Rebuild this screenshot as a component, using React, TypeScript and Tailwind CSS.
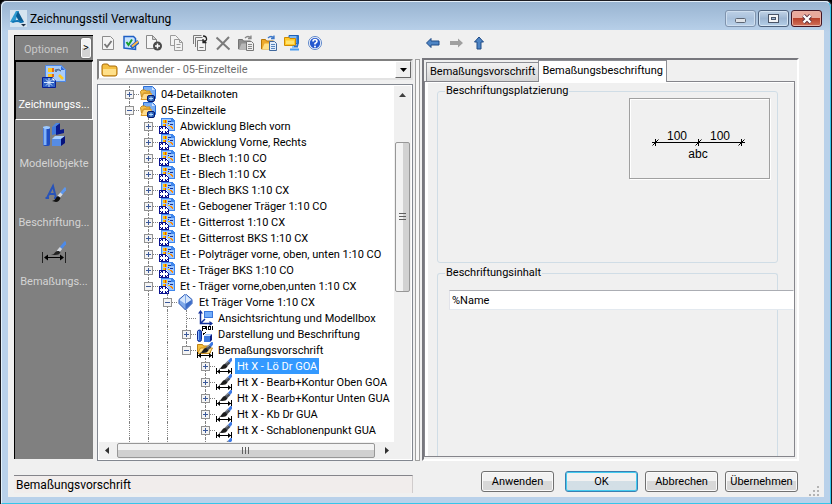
import { useState } from 'react'
import type { ReactNode } from 'react'
import clsx from 'clsx'

type IconName = 'folder' | 'sheet' | 'cube' | 'axes' | 'display' | 'dimFolder' | 'dim'

interface TreeRow {
  label: string
  level: number
  icon: IconName
  state?: 'open' | 'closed'
  last?: boolean
}

const ROWS: TreeRow[] = [
  { label: '04-Detailknoten', level: 0, icon: 'folder', state: 'closed' },
  { label: '05-Einzelteile', level: 0, icon: 'folder', state: 'open' },
  { label: 'Abwicklung Blech vorn', level: 1, icon: 'sheet', state: 'closed' },
  { label: 'Abwicklung Vorne, Rechts', level: 1, icon: 'sheet', state: 'closed' },
  { label: 'Et - Blech 1:10 CO', level: 1, icon: 'sheet', state: 'closed' },
  { label: 'Et - Blech 1:10 CX', level: 1, icon: 'sheet', state: 'closed' },
  { label: 'Et - Blech BKS 1:10 CX', level: 1, icon: 'sheet', state: 'closed' },
  { label: 'Et - Gebogener Träger 1:10 CO', level: 1, icon: 'sheet', state: 'closed' },
  { label: 'Et - Gitterrost 1:10 CX', level: 1, icon: 'sheet', state: 'closed' },
  { label: 'Et - Gitterrost BKS 1:10 CX', level: 1, icon: 'sheet', state: 'closed' },
  { label: 'Et - Polyträger vorne, oben, unten 1:10 CO', level: 1, icon: 'sheet', state: 'closed' },
  { label: 'Et - Träger BKS 1:10 CO', level: 1, icon: 'sheet', state: 'closed' },
  { label: 'Et - Träger vorne,oben,unten 1:10 CX', level: 1, icon: 'sheet', state: 'open' },
  { label: 'Et Träger Vorne 1:10 CX', level: 2, icon: 'cube', state: 'open' },
  { label: 'Ansichtsrichtung und Modellbox', level: 3, icon: 'axes' },
  { label: 'Darstellung und Beschriftung', level: 3, icon: 'display', state: 'closed' },
  { label: 'Bemaßungsvorschrift', level: 3, icon: 'dimFolder', state: 'open', last: true },
  { label: 'Ht X - Lö Dr GOA', level: 4, icon: 'dim', state: 'closed' },
  { label: 'Ht X - Bearb+Kontur Oben GOA', level: 4, icon: 'dim', state: 'closed' },
  { label: 'Ht X - Bearb+Kontur Unten GUA', level: 4, icon: 'dim', state: 'closed' },
  { label: 'Ht X - Kb Dr GUA', level: 4, icon: 'dim', state: 'closed' },
  { label: 'Ht X - Schablonenpunkt GUA', level: 4, icon: 'dim', state: 'closed' },
  { label: 'Ht X - Extern GUA', level: 4, icon: 'dim', state: 'closed' },
]

export default function App() {
  return (
    <div className="h-screen bg-black font-[Roboto,Arial,sans-serif] text-[11px] leading-4 text-black">
      <div className="flex h-full flex-col overflow-hidden rounded-t-md border-x border-t border-[#1c1c22] bg-[#b9d1ea]">
        <div className="flex min-h-0 flex-1 flex-col rounded-t-md border border-t-[#e4eef8] border-r-[#35c5ea] border-b-[#35c5ea] border-l-[#e4f2fb] bg-linear-to-b from-[#99b4d1] to-[#b9d1ea] to-[30px] px-1.5 pb-1.5">
          <TitleBar />
          <main className="flex min-h-0 flex-1 flex-col bg-[#f0f0f0] pl-1.5">
            <div className="flex min-h-0 flex-1">
              <Sidebar />
              <Browser />
              <div className="mt-[29px] mr-0.5 w-[5px] border border-[#a0a0a0] bg-[#f7f7f7]" />
              <Editor />
            </div>
            <Footer />
          </main>
        </div>
      </div>
    </div>
  )
}

function TitleBar() {
  return (
    <header className="flex h-7 shrink-0 items-start">
      <AppLogo />
      <h1 className="ml-[3px] pt-2 text-[12px] leading-[18px]">Zeichnungsstil Verwaltung</h1>
      <div className="mr-0.5 ml-auto flex gap-0.5 pt-2">
        <button
          aria-label="Minimieren"
          className="grid h-[17px] w-[31px] place-items-center rounded-[3px] border border-[#7f93ad] bg-linear-to-b from-[#bdd0e6] via-[#a9c1dc] to-[#bad1e9] shadow-[inset_0_0_0_1px_#cfdff0]"
        >
          <svg width="11" height="5" viewBox="0 0 11 5" className="mt-1">
            <rect x="0.5" y="0.5" width="10" height="4" rx="1" fill="#dfe3e8" stroke="#5d6675" />
          </svg>
        </button>
        <button
          aria-label="Maximieren"
          className="grid h-[17px] w-[31px] place-items-center rounded-[3px] border border-[#4e627d] bg-linear-to-b from-[#c3d5e8] via-[#9db6d2] to-[#b5cfe8] shadow-[inset_0_0_0_1px_#d6e5f3]"
        >
          <svg width="11" height="9" viewBox="0 0 11 9" shapeRendering="crispEdges">
            <rect x="0.5" y="0.5" width="10" height="8" fill="#f4f5f7" stroke="#4a5568" />
            <rect x="3.5" y="3.5" width="4" height="2" fill="#9db6d2" stroke="#4a5568" />
          </svg>
        </button>
        <button
          aria-label="Schließen"
          className="grid h-[17px] w-[31px] place-items-center rounded-[3px] border border-[#431422] bg-linear-to-b from-[#e9a99c] from-45% via-[#b8412b] via-50% to-[#d0705a] shadow-[inset_0_0_0_1px_#e8b0a4]"
        >
          <svg width="12" height="10" viewBox="0 0 12 10">
            <path d="M2.5 1.5 9.5 8.5M9.5 1.5 2.5 8.5" stroke="#5a3040" strokeWidth="4" />
            <path d="M2.5 1.5 9.5 8.5M9.5 1.5 2.5 8.5" stroke="#fff" strokeWidth="2.4" />
          </svg>
        </button>
      </div>
    </header>
  )
}

function Sidebar() {
  const [active, setActive] = useState(0)
  const items = [
    { label: 'Zeichnungss...', icon: <StyleIcon /> },
    { label: 'Modellobjekte', icon: <ModelIcon /> },
    { label: 'Beschriftung...', icon: <LabelIcon /> },
    { label: 'Bemaßungs...', icon: <DimensionIcon /> },
  ]

  return (
    <nav className="mt-[5px] mr-1 mb-0.5 w-[79px] shrink-0 border-t border-l border-black bg-[#808080]">
      <div className="flex h-[25px] items-center border-b border-black">
        <span className="ml-[9px] pt-1 text-[#c8c8c8]">Optionen</span>
        <button
          aria-label="Optionen ausklappen"
          className="mr-px ml-auto h-[22px] w-3 rounded-[3px] border border-[#707070] bg-linear-to-b from-[#f2f2f2] from-50% to-[#d4d4d4] to-50% shadow-[inset_0_0_0_1px_#fcfcfc]"
        >
          &gt;
        </button>
      </div>
      {items.map((item, i) => (
        <button
          key={item.label}
          onClick={() => setActive(i)}
          className={clsx(
            'flex h-[59px] w-full flex-col items-center gap-1 border pt-0.5 whitespace-nowrap',
            active === i
              ? 'border-t-black border-r-white border-b-white border-l-black text-white'
              : 'border-transparent text-[#d4d4d4]',
          )}
        >
          {item.icon}
          <span className="pt-[5px]">{item.label}</span>
        </button>
      ))}
    </nav>
  )
}

function Browser() {
  return (
    <section className="mr-0.5 flex w-[316px] shrink-0 flex-col">
      <div className="flex h-[29px] shrink-0 items-center gap-[7px] pb-[3px] pl-[3px]">
        <Tool label="Prüfen"><CheckPage /></Tool>
        <Tool label="Bearbeiten"><EditPage /></Tool>
        <Tool label="Neu"><NewPage /></Tool>
        <Tool label="Kopieren"><CopyPage /></Tool>
        <Tool label="Einfügen"><PastePage /></Tool>
        <Tool label="Löschen"><DeleteCross /></Tool>
        <Tool label="Exportieren"><FolderExchange gray /></Tool>
        <Tool label="Importieren"><FolderExchange /></Tool>
        <Tool label="Archivieren"><ArchiveIcon /></Tool>
        <Tool label="Hilfe"><HelpIcon /></Tool>
      </div>

      <div className="flex h-[21px] shrink-0 items-center border-2 border-t-[#808080] border-r-[#e3e3e3] border-b-[#e3e3e3] border-l-[#808080] bg-white pl-0.5">
        <svg width="17" height="16" viewBox="0 0 17 16">
          <path d="M1 4q0-2 2-2h3q1.500 0 2 2h6q2 0 2 2v6q0 2-2 2H3q-2 0-2-2z" fill="#f5c043" stroke="#a86a08" />
          <path d="M2 7h13v5q0 1-1 1H3q-1 0-1-1z" fill="#ffe08a" />
        </svg>
        <select
          aria-label="Ordner"
          className="ml-[7px] h-4 min-w-0 flex-1 appearance-none bg-white text-[#6d6d6d] outline-none"
        >
          <option>Anwender - 05-Einzelteile</option>
        </select>
        <span className="grid h-[17px] w-4 place-items-center border border-t-white border-r-[#696969] border-b-[#696969] border-l-white bg-[#f0f0f0]">
          <svg width="7" height="4" viewBox="0 0 7 4">
            <path d="M0 0h7L3.500 4z" />
          </svg>
        </span>
      </div>

      <div className="mt-1 flex min-h-0 flex-1 flex-col border border-[#828790] bg-white p-px">
        <div className="flex min-h-0 flex-1">
          <Tree />
          <VerticalScroll />
        </div>
        <HorizontalScroll />
      </div>
    </section>
  )
}

function Tool({ label, children }: { label: string; children: ReactNode }) {
  return (
    <button aria-label={label} title={label} className="size-4 shrink-0">
      {children}
    </button>
  )
}

function Tree() {
  const [selected, setSelected] = useState('Ht X - Lö Dr GOA')

  return (
    <ul role="tree" className="min-w-0 flex-1 overflow-hidden pl-[21px]">
      {ROWS.map((row) => (
        <li
          key={row.label}
          role="treeitem"
          aria-level={row.level + 1}
          aria-selected={row.label === selected}
          onClick={() => setSelected(row.label)}
          className="flex h-4 cursor-default whitespace-nowrap"
        >
          {Array.from({ length: row.level }, (_, i) => (
            <span key={i} className="flex w-[19px] shrink-0 pl-[9px]">
              {i < 3 && <span className="border-l border-dotted border-[#808080]" />}
            </span>
          ))}
          <Branch state={row.state} last={row.last} />
          <span className="mr-[3px] ml-px shrink-0">
            <TreeIcon name={row.icon} />
          </span>
          <span className={clsx('px-0.5 leading-[18px]', row.label === selected && 'bg-[#3399ff] text-white')}>
            {row.label}
          </span>
        </li>
      ))}
    </ul>
  )
}

function Branch({ state, last }: Pick<TreeRow, 'state' | 'last'>) {
  return (
    <span className="relative flex w-[19px] shrink-0 pl-[9px]">
      <span className={clsx('border-l border-dotted border-[#808080]', last && 'h-2')} />
      <span className="mt-2 flex-1 self-start border-t border-dotted border-[#808080]" />
      {state && (
        <button
          aria-label={state === 'open' ? 'Zuklappen' : 'Aufklappen'}
          className="absolute top-1 left-[5px] size-[9px] bg-white"
        >
          <svg width="9" height="9" viewBox="0 0 9 9" shapeRendering="crispEdges">
            <rect x="0.5" y="0.5" width="8" height="8" fill="#f4f4f4" stroke="#919191" />
            <path d="M2 4.500h5" stroke="#3c5a9a" />
            {state === 'closed' && <path d="M4.500 2v5" stroke="#3c5a9a" />}
          </svg>
        </button>
      )}
    </span>
  )
}

function VerticalScroll() {
  return (
    <div aria-hidden="true" className="flex w-[17px] shrink-0 flex-col items-center bg-[#f0f0f0]">
      <svg width="7" height="4" viewBox="0 0 7 4" className="mt-[7px] mb-[45px] shrink-0">
        <path d="M0 4h7L3.500 0z" fill="#404040" />
      </svg>
      <div className="grid h-[42%] w-[15px] place-items-center rounded-xs border border-[#979797] bg-linear-to-r from-[#f3f3f3] from-50% to-[#d2d2d2] to-50%">
        <svg width="7" height="8" viewBox="0 0 7 8" shapeRendering="crispEdges">
          <path d="M0 .5h7M0 3.500h7M0 6.500h7" stroke="#606060" />
        </svg>
      </div>
    </div>
  )
}

function HorizontalScroll() {
  return (
    <div aria-hidden="true" className="flex h-[17px] shrink-0 items-center bg-[#f0f0f0] pr-[22px] pl-1.5">
      <svg width="4" height="7" viewBox="0 0 4 7">
        <path d="M4 0v7L0 3.500z" fill="#303030" />
      </svg>
      <div className="mr-2.5 ml-2 grid h-[15px] flex-1 place-items-center rounded-xs border border-[#979797] bg-linear-to-b from-[#f3f3f3] from-50% to-[#d0d0d0] to-50%">
        <svg width="8" height="7" viewBox="0 0 8 7" shapeRendering="crispEdges">
          <path d="M.5 0v7M3.500 0v7M6.500 0v7" stroke="#606060" />
        </svg>
      </div>
      <svg width="4" height="7" viewBox="0 0 4 7">
        <path d="M0 0v7L4 3.500z" fill="#303030" />
      </svg>
    </div>
  )
}

function Editor() {
  const [tab, setTab] = useState(1)
  const tabs = ['Bemaßungsvorschrift', 'Bemaßungsbeschriftung']

  return (
    <section className="mr-[25px] flex min-w-0 flex-1 flex-col">
      <div className="flex h-7 shrink-0 items-center gap-[7px] pb-0.5 pl-[3px]">
        <Tool label="Zurück">
          <svg width="16" height="16" viewBox="0 0 16 16">
            <path d="M1.500 8 6 3.500V6h8v4H6v2.500z" fill="#4d84c4" stroke="#1f4a86" />
          </svg>
        </Tool>
        <Tool label="Vorwärts">
          <svg width="16" height="16" viewBox="0 0 16 16">
            <path d="M15 8 10 3.500V6H2v4h8v2.500z" fill="#a0a0a0" />
          </svg>
        </Tool>
        <Tool label="Nach oben">
          <svg width="16" height="16" viewBox="0 0 16 16">
            <path d="M8 2 12.500 7H10v7H6V7H3.500z" fill="#4d84c4" stroke="#1f4a86" />
          </svg>
        </Tool>
      </div>
      <div className="flex min-h-0 flex-1 flex-col border-2 border-t-[#77777d] border-r-white border-b-white border-l-[#77777d] pr-0.5 pb-0.5">
        <div role="tablist" className="flex h-[21px] shrink-0 items-end pl-0.5">
          {tabs.map((label, i) => (
            <button
              key={label}
              role="tab"
              aria-selected={tab === i}
              onClick={() => setTab(i)}
              className={clsx(
                'border border-b-0 border-[#8c8e94] px-[3px]',
                tab === i
                  ? 'z-10 -mb-px h-[22px] bg-white pb-0.5'
                  : 'h-[19px] border-r-0 bg-linear-to-b from-[#f2f2f2] to-[#d6d6d6]',
              )}
            >
              {label}
            </button>
          ))}
        </div>
        <div className="min-h-0 flex-1 overflow-hidden border border-[#85858b] bg-[#f0f0f0]">
          <div className="flex h-full flex-col gap-1 border-t border-l-3 border-white pt-0.5 pr-4 pl-[9px]">
            <fieldset className="flex h-[178px] min-w-0 shrink-0 justify-end rounded-[3px] border border-[#d0dde6] pt-px pr-[7px]">
              <legend className="ml-[7px] px-px leading-3">Beschriftungsplatzierung</legend>
              <Placement />
            </fieldset>
            <fieldset className="-mb-1 min-w-0 flex-1 rounded-t-[3px] border border-b-0 border-[#d0dde6] pt-[11px] pl-[11px]">
              <legend className="-ml-1 px-px leading-3">Beschriftungsinhalt</legend>
              <div className="-mr-[17px]">
                <input
                  aria-label="Beschriftungsinhalt"
                  defaultValue="%Name"
                  className="block h-5 w-full border border-t-[#abadb3] border-r-white border-b-[#e3e9ef] border-l-[#e2e3ea] bg-white px-0.5 outline-none"
                />
              </div>
            </fieldset>
          </div>
        </div>
      </div>
    </section>
  )
}

function Placement() {
  return (
    <button
      aria-label="Platzierung wählen"
      className="grid h-[81px] w-[141px] place-items-center border border-[#a0a0a0] shadow-[inset_1px_1px_0_#fff,1px_1px_0_#fff]"
    >
      <svg
        width="139"
        height="79"
        viewBox="0 0 139 79"
        className="font-['Liberation_Sans',Arial,sans-serif] text-[12px]"
      >
        <path d="M22 43.500h93" stroke="#000" shapeRendering="crispEdges" />
        {[25.5, 68.5, 111.5].map((x) => (
          <g key={x} stroke="#000">
            <path d={`M${x} 40v7`} shapeRendering="crispEdges" />
            <path d={`M${x - 3} 46.500l6-6`} />
          </g>
        ))}
        <text x="47" y="41" textAnchor="middle">100</text>
        <text x="90" y="41" textAnchor="middle">100</text>
        <text x="68" y="59" textAnchor="middle">abc</text>
      </svg>
    </button>
  )
}

function Footer() {
  return (
    <footer className="flex h-9 shrink-0 items-start pt-2.5">
      <output className="mt-1 h-[18px] w-[399px] border-t border-r border-t-[#85858b] border-r-[#d0cccc] bg-[#f1edec] pl-0.5 text-[12px] leading-[18px]">
        Bemaßungsvorschrift
      </output>
      <div className="ml-auto flex gap-[7px]">
        <DialogButton>Anwenden</DialogButton>
        <DialogButton primary>OK</DialogButton>
        <DialogButton>Abbrechen</DialogButton>
        <DialogButton>Übernehmen</DialogButton>
      </div>
      <svg width="12" height="12" viewBox="0 0 12 12" className="mr-1 ml-2.5 self-end" fill="#b4b4b4">
        <path d="M9 1h2v2H9zM5 5h2v2H5zM9 5h2v2H9zM1 9h2v2H1zM5 9h2v2H5zM9 9h2v2H9z" />
      </svg>
    </footer>
  )
}

function DialogButton({ primary, children }: { primary?: boolean; children: ReactNode }) {
  return (
    <button
      className={clsx(
        'h-[21px] w-[73px] rounded-[3px] border bg-linear-to-b from-[#f2f2f2] from-50%',
        primary
          ? 'ml-1 border-[#3c7fb1] to-[#d3dfe6] to-50% shadow-[inset_0_0_0_1px_#44ccf0]'
          : 'border-[#707070] to-[#d8d8d8] to-50% shadow-[inset_0_0_0_1px_#fafafa]',
      )}
    >
      {children}
    </button>
  )
}

function AppLogo() {
  return (
    <svg width="17" height="17" viewBox="0 0 17 17" className="mt-2 ml-0.5 shrink-0">
      <rect width="17" height="17" fill="#d5e4f0" />
      <path d="M0 12 6 1h3l-4 11z" fill="#2d9ad0" />
      <path d="M8 1 14 12l-4 1-4-7z" fill="#0b5c93" />
      <path d="M1 12q6-4 13 0l-3 1q-4-2-8 0z" fill="#0f75b5" />
      <path d="M11 14h5l-2.500 2.500z" fill="#1f2f44" />
    </svg>
  )
}

function TreeIcon({ name }: { name: IconName }) {
  return (
    <svg width="16" height="16" viewBox="0 0 16 16">
      {name === 'folder' && (
        <>
          <path d="M3.500.5h9l3 3v9h-12z" fill="#79aef5" stroke="#2c6fd6" />
          <path d="M12 1v3h3z" fill="#d4e6ff" />
          <path d="M.5 5.500 2 4h3l1 1h4v2H3.500l-2 4z" fill="#f5bf4a" stroke="#c48a1c" />
          <path d="M1 13.500 3.500 7.500h8l-2 6z" fill="#ffdc8c" stroke="#d99a2b" />
          <rect x="7.500" y="9.500" width="7" height="6" rx="1.500" fill="#2b62b8" stroke="#06186e" />
          <path d="M11 10.500v4M9 12.500h4" stroke="#b6dcff" />
        </>
      )}
      {name === 'sheet' && (
        <g shapeRendering="crispEdges">
          <path d="M2 0h11l3 3v10H2z" fill="#3f86ec" />
          <path d="M3 1h9v3h3v8H3z" fill="#9cc6ff" />
          <path d="M4 2h4v3H4zM4 6h3v2H4zM9 7h2v1H9z" fill="#ffc400" />
          <path d="M6 2h1v3H6zM6 6h1v2H6z" fill="#e0500a" />
          <path d="M9 3h3v1H9zM9 5h1v1H9zM11 6h3v1h-3z" fill="#12309a" />
          <path d="M11 8h2v1h-2zM12 9h2v1h-2zM13 10h1v1h-1z" fill="#ff8a00" />
          <path d="M0 8h7v1h1v1h1v1h1v5H0z" fill="#0a1290" />
          <path
            d="M4 9h1v6H4zM5 9h1v6H5zM1 11h8v2H1zM2 10h1v1H2zM7 10h1v1H7zM2 13h1v1H2zM7 13h1v1H7zM1 9h1v1H1zM1 14h1v1H1zM8 14h1v1H8z"
            fill="#fff"
          />
          <path d="M7 8h1v1H7zM8 9h1v1H8z" fill="#fff" />
        </g>
      )}
      {name === 'cube' && (
        <>
          <path d="M7.500 0 14 5.500v4L7.500 16 1 9.500v-4z" fill="#7fa8e8" stroke="#2a57b4" />
          <path d="M7.500.5 13.500 6l-6 4-6-4z" fill="#d5e6fc" />
          <path d="M7.500 10v5.500l6-6V6z" fill="#3c6cc6" />
          <path d="M7.500 1v9" stroke="#7fa8e8" />
        </>
      )}
      {name === 'axes' && (
        <>
          <rect x="7.500" y="1.500" width="8" height="6" fill="#73adfa" stroke="#3976db" />
          <path d="M3.500 2v11.500H15M3.500 13.500 8 9" fill="none" stroke="#12309a" strokeWidth="1.500" />
          <path d="M1 3.500 3.500 0 6 3.500zM12.500 11l3.500 2.500-3.500 2.500z" fill="#12309a" />
        </>
      )}
      {name === 'display' && (
        <>
          <rect x="0.500" y="4" width="4" height="11.500" rx="2" fill="#2f66d0" stroke="#0d2b94" />
          <path d="M1.500 5v9" stroke="#8cb8ff" />
          <path d="M7 9.500 9 8h6l-1.500 1.500z" fill="#9cc4ff" />
          <rect x="7" y="10" width="6" height="6" fill="#3c78de" />
          <path d="m13 10 2-2v6l-2 2z" fill="#0b1e86" />
          <path
            d="M5.500 0v5M6 .5h2v2H6M9.500 0v4M11.500.5h2v3h-2zM15.500 0v4M6 8.500l3-2.500"
            fill="none"
            stroke="#000"
            shapeRendering="crispEdges"
          />
        </>
      )}
      {name === 'dimFolder' && (
        <>
          <path d="M.5 11V2.500h5l1 1.500h7v7z" fill="#f5bf3c" stroke="#bf8316" />
          <path d="M.5 11.500 3.500 6h12l-3 5.500z" fill="#ffe08a" stroke="#c98e20" />
          <Brush />
        </>
      )}
      {name === 'dim' && <Brush />}
    </svg>
  )
}

function Brush() {
  return (
    <>
      <path d="M12.500 4.500 16 .5" stroke="#3c78e4" strokeWidth="3" />
      <path d="m9.500 7.500 3.500-3.500" stroke="#4a4f58" strokeWidth="3.500" />
      <path d="m10 5.500 2.500-2.500" stroke="#b4bcc8" />
      <path d="M3 10.500q2-.5 3-2.500t3-2l2.500 2.500Q10 11 6 11z" fill="#1c1c1c" />
      <path d="M.5 10v6M15.500 10v6M1 13.500h14" stroke="#000" shapeRendering="crispEdges" />
      <path d="m1 13.500 3-2.500v5zM15 13.500 12 11v5z" />
    </>
  )
}

function StyleIcon() {
  return (
    <svg width="24" height="24" viewBox="0 0 24 24" className="shrink-0">
      <path d="M3.500 1.500h16l4 4v12h-20z" fill="#a9ccfa" stroke="#4b86e4" />
      <path d="M19 2v4h4z" fill="#2f6be0" />
      <path d="M6 4h4v4H6zM6 10h4v3H6z" fill="#ffc81e" />
      <path d="M11 4v4M11 10v3" stroke="#e06a1b" strokeWidth="2" />
      <path d="M13 6q4-2 6 1l-2-1q-2-1-3 2z" fill="#6d88a6" stroke="#526e93" />
      <path d="m17 11 4 4" stroke="#ffc81e" strokeWidth="2.500" />
      <path d="M.5 13.500h10l3 3v7H.5z" fill="#2f62c4" stroke="#0a1f95" />
      <path d="M7 14v9M2 18.500h10M4 15.500l6 6M10 15.500l-6 6" stroke="#d8e8ff" />
      <path d="M10.500 13.500v3h3z" fill="#fff" />
    </svg>
  )
}

function ModelIcon() {
  return (
    <svg width="24" height="24" viewBox="0 0 24 24" className="shrink-0">
      <rect x="1" y="4" width="7" height="19" rx="2" fill="#1f4cc0" />
      <path d="M3 6v16" stroke="#7fb2fa" strokeWidth="3" />
      <ellipse cx="4.500" cy="4.500" rx="3.500" ry="1.500" fill="#9cc9ff" />
      <path d="m10 4 4-1v8l-4 1z" fill="#3f78dc" />
      <path d="m14 3 4-3v7l4-1v4l-8 2z" fill="#0a1a8c" />
      <path d="m10 4 4-4h4l-4 3z" fill="#4a86e6" />
      <path d="m10 16 3-3h10l-4 3z" fill="#a9d0ff" />
      <path d="M10 16h9v7h-9z" fill="#568ce4" />
      <path d="m19 16 4-3v7l-4 3z" fill="#06127c" />
    </svg>
  )
}

function LabelIcon() {
  return (
    <svg width="24" height="24" viewBox="0 0 24 24" className="shrink-0">
      <path d="M5 16 11 4l3 12M7.500 12h6M3.500 16H7M12 16h4" fill="none" stroke="#2853b8" strokeWidth="2" />
      <path d="m19 12 5-6" stroke="#5c97ee" strokeWidth="3" />
      <path d="m16.500 15 3-3.500" stroke="#d5d9e0" strokeWidth="3" />
      <path d="M10 19q3-.5 4-3t3-1.500l1.500 1.500q-1.500 4-4.500 4z" fill="#111" />
    </svg>
  )
}

function DimensionIcon() {
  return (
    <svg width="24" height="24" viewBox="0 0 24 24" className="shrink-0">
      <path d="m19 7 5-6" stroke="#4d8ae8" strokeWidth="3" />
      <path d="m16 10.500 3-3.500" stroke="#d5d9e0" strokeWidth="3" />
      <path d="M9 14q3-.5 4-2.500t4-1.500l1.500 1.500Q17 14 13 14z" fill="#222" />
      <path d="M.5 11v11M23.500 11v11" stroke="#222" shapeRendering="crispEdges" />
      <path d="M3 16.500h18" stroke="#000" />
      <path d="m2 16.500 4-3v6zM22 16.500l-4-3v6z" />
    </svg>
  )
}

function CheckPage() {
  return (
    <svg width="16" height="16" viewBox="0 0 16 16">
      <path d="M2.500 1.500h8l3 3v10h-11z" fill="#f4f4f4" stroke="#8c8c8c" />
      <path d="m4.500 9 2.500 3 4.500-6" fill="none" stroke="#777" strokeWidth="1.800" />
    </svg>
  )
}

function EditPage() {
  return (
    <svg width="16" height="16" viewBox="0 0 16 16">
      <path d="M1 1.500h9.500l2 2v11L1 13z" fill="#c8e2ff" stroke="#1f5fc4" strokeWidth="1.500" />
      <path d="m3.500 7 2 3 3.500-5.500" fill="none" stroke="#19a02c" strokeWidth="2" />
      <path d="m8 12.500 7.500-6" stroke="#1f5fc4" strokeWidth="4" />
      <path d="m9 11.500 6-5" stroke="#ffb845" strokeWidth="2" />
    </svg>
  )
}

function NewPage() {
  return (
    <svg width="16" height="16" viewBox="0 0 16 16">
      <path d="M.5.5h6l4 4v9H.5z" fill="#f6f6f6" stroke="#8a8a8a" />
      <path d="M6.500.5v4h4z" fill="#d0d0d0" stroke="#8a8a8a" />
      <circle cx="11.500" cy="11" r="4.500" fill="#4a4a4a" />
      <path d="M11.500 8.500v5M9 11h5" stroke="#fff" strokeWidth="1.500" />
    </svg>
  )
}

function CopyPage() {
  return (
    <svg width="16" height="16" viewBox="0 0 16 16" fill="#f3f3f3" stroke="#9b9b9b">
      <path d="M1.500.5h5l3 3v7h-8z" />
      <path d="M5.500 4.500h5l3 3v8h-8z" />
      <path d="M10.500 4.500v3h3M7.500 9.500h4M7.500 12.500h4" fill="none" />
    </svg>
  )
}

function PastePage() {
  return (
    <svg width="16" height="16" viewBox="0 0 16 16" fill="#f3f3f3" stroke="#7a7a7a">
      <path d="M1.500 9V.5h8M3.500 12V2.500h7" fill="none" />
      <path d="M5.500 5.500h8v10h-8zM7.500 12.500h4" />
      <path d="M11 1q4 0 3.500 4L11 7.500M11 4v3.500h3.500" fill="none" stroke="#222" strokeWidth="1.300" />
    </svg>
  )
}

function DeleteCross() {
  return (
    <svg width="16" height="16" viewBox="0 0 16 16">
      <path d="m1.500 2.500 13 12M14 2 2 14.500" stroke="#7b7b7b" strokeWidth="2" />
    </svg>
  )
}

function FolderExchange({ gray }: { gray?: boolean }) {
  return (
    <svg width="16" height="16" viewBox="0 0 16 16">
      <path d="M.5 14V4.500h4l1 1.500h7v8z" fill={gray ? '#8f8f8f' : '#eda92c'} stroke={gray ? '#737373' : '#b87708'} />
      <path d="m1 14.500 2.500-6h11l-2 6z" fill={gray ? '#b8b8b8' : '#ffe18a'} />
      <path d="M7 3q3-3 6 0M13 .5V3.500h-3" fill="none" stroke={gray ? '#888' : '#3a76c8'} strokeWidth="1.300" />
      <path d="M8.500 6.500h5l2 2v7h-7z" fill={gray ? '#eee' : '#e2edfb'} stroke={gray ? '#777' : '#40689c'} />
      <path d="M10 9.500h4M10 11.500h4M10 13.500h4" stroke={gray ? '#888' : '#5a86bd'} />
    </svg>
  )
}

function ArchiveIcon() {
  return (
    <svg width="16" height="16" viewBox="0 0 16 16">
      <path d="M5 .5h9.500v8H5z" fill="#7db8f5" stroke="#1c60b8" />
      <path d="M.5 2.500H5l1 1h5.500v7H.5z" fill="#ffc928" stroke="#d08b00" />
      <path d="M2 5.500h8v3.500H2z" fill="#ffe36e" />
      <path d="M13.500 1v9.500M9 11.500h5" stroke="#2a72cc" strokeWidth="2" />
      <path d="M6 14.500h9" stroke="#4a9cf0" strokeWidth="2" />
      <path d="M9 11v3" stroke="#8cc4f8" strokeWidth="2" />
    </svg>
  )
}

function HelpIcon() {
  return (
    <svg width="16" height="16" viewBox="0 0 16 16">
      <circle cx="8" cy="8" r="6.500" fill="#fff" stroke="#5a84c8" />
      <circle cx="8" cy="8" r="5.200" fill="#2458cf" />
      <path d="M6 6.500q0-2 2-2t2 1.700Q10 7.300 8 8.500v1" fill="none" stroke="#fff" strokeWidth="1.600" />
      <circle cx="8" cy="11.500" r="1" fill="#fff" />
    </svg>
  )
}
